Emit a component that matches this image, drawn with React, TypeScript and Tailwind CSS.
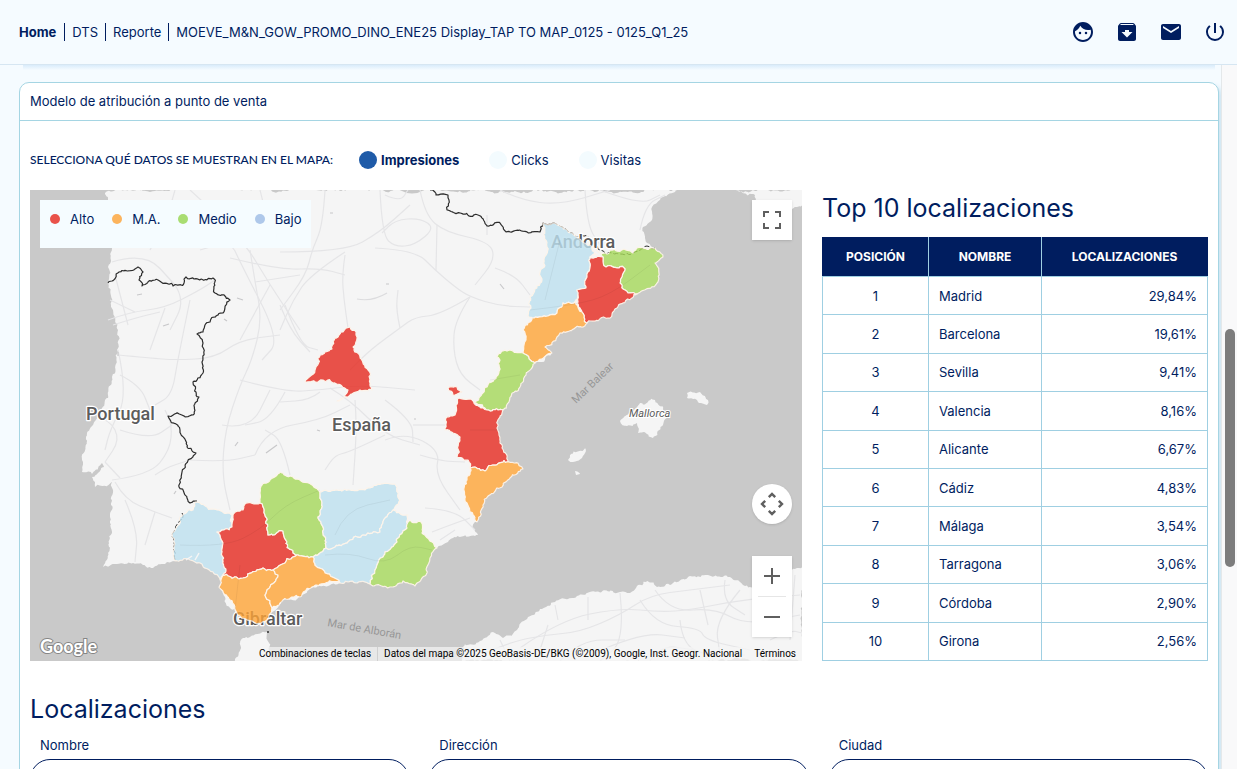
import { MdArchive, MdEmail, MdFace, MdPowerSettingsNew } from "react-icons/md";

type Point = [number, number];

const RED = "#e6291f";
const ORANGE = "#fea437";
const GREEN = "#a5d859";
const BLUE = "#bee1f0";

const legend = [
  { label: "Alto", dot: "bg-[#e9524a]" },
  { label: "M.A.", dot: "bg-[#fcb45d]" },
  { label: "Medio", dot: "bg-[#a9dd72]" },
  { label: "Bajo", dot: "bg-[#aec8ea]" },
];

const locations = [
  { name: "Madrid", value: "29,84%" },
  { name: "Barcelona", value: "19,61%" },
  { name: "Sevilla", value: "9,41%" },
  { name: "Valencia", value: "8,16%" },
  { name: "Alicante", value: "6,67%" },
  { name: "Cádiz", value: "4,83%" },
  { name: "Málaga", value: "3,54%" },
  { name: "Tarragona", value: "3,06%" },
  { name: "Córdoba", value: "2,90%" },
  { name: "Girona", value: "2,56%" },
];

const iberia =
  "125,190 105,193 110,208 108,225 112,248 108,267 108,283 113,310 118,330 117,350 112,377 105,400 101,410 97,417 87,433 82,460 82,472 92,474 102,463 104,467 98,473 92,477 95,487 112,482 113,490 110,517 112,533 108,553 103,567 117,564 133,563 153,568 167,562 175,561 190,560 200,563 213,572 220,580 219,587 225,597 230,608 247,622 260,625 268,622 272,612 282,600 297,599 310,588 340,583 370,584 390,587 403,581 415,586 427,573 430,558 437,548 453,538 478,535 473,528 477,522 483,505 497,488 510,478 523,469 518,463 509,462 502,448 497,428 498,420 503,410 520,387 535,363 542,362 552,353 545,347 560,333 587,323 608,318 615,309 637,294 658,282 659,273 655,263 663,257 655,248 647,243 643,227 652,220 652,207 663,197 677,190";

const landmasses = [
  "735,189 755,195 758,206 792,209 803,205 803,189",
  "234,662 243,638 267,632 272,662",
  "460,662 463,647 480,641 493,632 503,638 517,630 528,617 540,609 555,602 577,596 620,592 630,593 647,581 657,587 673,583 690,576 730,577 743,585 757,592 780,587 797,568 803,567 803,662",
  "620,421 630,413 640,403 655,400 668,412 663,425 653,438 647,434 638,433 637,423 627,426",
  "687,393 700,392 708,400 707,405 697,400 687,398",
  "568,460 570,455 585,448 585,453 573,462",
  "575,471 580,474 576,475",
];

const regions = [
  { name: "Lleida", fill: BLUE, points: "543,223 553,223 567,230 577,237 592,247 597,255 590,257 587,277 586,288 577,290 575,302 563,303 557,313 532,318 529,317 530,297 542,280 547,247" },
  { name: "Girona", fill: GREEN, points: "593,247 600,253 607,254 610,250 633,253 637,248 655,248 663,257 655,263 659,273 658,282 637,294 625,290 620,283 625,269 606,267 603,257" },
  { name: "Barcelona", fill: RED, points: "590,257 603,257 606,267 625,269 620,283 625,290 637,294 615,309 608,318 587,323 582,312 577,290 586,288 587,277" },
  { name: "Tarragona", fill: ORANGE, points: "523,330 532,318 557,313 563,303 575,302 582,312 587,323 560,333 545,347 552,353 535,363 523,353 526,340" },
  { name: "Castellón", fill: GREEN, points: "497,357 503,351 523,353 535,363 520,387 503,410 487,410 474,402 487,387 498,375 500,360" },
  { name: "Valencia", fill: RED, points: "459,398 470,399 480,407 487,410 503,410 498,420 497,428 502,448 509,462 493,465 485,471 470,468 468,460 457,457 460,437 453,433 445,430 447,417 455,415" },
  { name: "Rincón de Ademuz", fill: RED, points: "448,388 457,387 462,392 453,395" },
  { name: "Alicante", fill: ORANGE, points: "470,468 485,471 493,465 509,462 518,463 523,469 510,478 497,488 483,505 477,522 467,503 464,488 467,480" },
  { name: "Madrid", fill: RED, points: "350,327 356,335 354,350 360,357 368,370 370,380 372,390 360,390 348,397 337,401 348,390 333,383 323,380 305,382 315,370 318,358 325,352 332,349 335,338 343,332" },
  { name: "Huelva", fill: BLUE, points: "193,510 197,502 217,510 232,515 232,527 217,532 223,543 223,575 220,580 213,572 200,563 190,560 175,561 172,537 180,517 187,512" },
  { name: "Sevilla", fill: RED, points: "217,532 232,527 233,515 243,510 245,504 254,504 260,503 265,515 268,535 283,531 287,542 298,555 285,563 273,570 263,568 243,578 223,575 223,543" },
  { name: "Córdoba", fill: GREEN, points: "260,503 260,493 262,485 280,472 293,477 320,492 322,503 318,517 323,533 326,548 313,557 298,555 287,542 283,531 268,535 265,515" },
  { name: "Jaén", fill: BLUE, points: "320,492 350,490 370,488 390,484 397,487 400,500 393,510 383,523 380,532 363,535 350,540 333,548 326,548 323,533 318,517 322,503" },
  { name: "Granada", fill: BLUE, points: "326,548 333,548 350,540 363,535 380,532 383,523 393,510 408,515 407,528 397,542 383,557 375,570 370,584 340,583 317,567 313,557" },
  { name: "Almería", fill: GREEN, points: "410,520 421,522 422,533 437,548 430,558 427,573 415,586 403,581 390,587 370,584 375,570 383,557 397,542 407,528" },
  { name: "Cádiz", fill: ORANGE, points: "223,575 243,578 263,568 273,570 278,575 267,590 265,595 272,608 267,620 257,624 240,616 230,600 219,587" },
  { name: "Málaga", fill: ORANGE, points: "278,575 273,570 285,563 298,555 313,557 317,567 340,583 312,587 300,597 283,600 272,608 265,595 267,590" },
];

const borders = [
  "108,283 119,272 138,267 143,272 139,280 142,286 155,280 173,286 184,283 186,277 213,278 215,293 230,300 223,313 210,322 203,332 197,334 203,343 202,362 203,373 193,382 199,397 193,415 168,416 180,430 187,447 196,453 182,472 179,487 190,503 197,501",
  "430,190 436,195 448,195 447,210 478,215 487,226 500,223 510,232 540,232 543,223 553,223",
];

const dimBorders = [
  "182,513 172,537 175,560",
  "553,223 567,230 577,237 587,236 600,250 607,254 633,253 647,246 655,248",
];

const roads = [
  "112,262 145,252 175,285",
  "150,250 165,225 175,190",
  "190,190 240,235 270,285 300,330",
  "108,320 130,312 165,308 200,290 215,280",
  "113,325 135,318 160,312",
  "118,355 150,358 175,360 215,358 240,340 280,335",
  "165,308 150,350",
  "190,300 178,358 172,395 155,405",
  "118,350 128,395 110,430 105,450",
  "115,275 128,325",
  "110,300 135,312",
  "97,417 110,420 120,440 105,462",
  "112,480 150,475 170,450 172,425 165,410",
  "115,482 125,500 155,512 172,518",
  "125,500 138,530 135,562",
  "155,512 145,545",
  "105,462 120,478",
  "155,475 165,468 190,460",
  "250,250 255,282 262,320 252,360 240,385 225,430 222,475 230,510",
  "190,460 225,462 255,455",
  "222,425 250,430 270,390",
  "270,285 240,340",
  "255,282 300,275",
  "325,190 323,225 312,250 306,275 280,310",
  "280,252 345,252 380,232 410,205",
  "345,255 342,275 344,300 348,328",
  "345,252 310,275 293,300 280,330",
  "380,190 382,235 395,247 415,245 435,228 420,218 395,220 382,233",
  "385,195 400,202 408,190",
  "375,248 415,250 435,270 455,287 470,297 500,306 530,307",
  "437,225 436,270",
  "420,190 425,215 445,232 490,242 495,260 475,285",
  "495,268 515,275 530,295",
  "470,297 440,315 415,317 400,328 370,350 350,370",
  "470,297 455,320 453,350 460,375 480,390",
  "400,328 396,310 398,290",
  "285,305 300,345 318,350",
  "280,305 290,330 310,352",
  "200,250 230,240 240,262 280,340 262,360",
  "230,258 280,270 320,268 345,275",
  "240,380 285,392 320,390 360,385 415,390",
  "285,392 270,420 245,425",
  "320,392 310,400 280,402",
  "330,388 350,400 385,435 420,445",
  "355,400 357,425 353,485",
  "385,435 350,452 335,455 325,470",
  "385,400 412,420 413,442",
  "385,440 405,432 440,450 435,475 460,510",
  "420,455 440,461 465,462",
  "413,425 445,425",
  "425,508 455,510 475,530",
  "432,532 450,525 470,518",
  "440,540 455,530",
  "500,190 520,200 560,205 610,190",
  "585,190 587,225 600,245",
  "600,190 640,205 660,195",
  "640,230 645,205 665,195",
  "487,215 487,235",
  "175,285 185,300 170,330",
  "120,430 150,440 172,425",
  "120,375 140,385 150,410",
  "260,190 268,220 265,245",
  "255,455 265,430 320,420 350,405",
  "290,475 282,440 265,430",
];

const regionRoads = [
  "180,545 225,547 260,530 285,505 320,490",
  "335,535 345,510 390,500",
  "325,555 350,552 385,565 410,545 432,550",
  "240,565 235,610",
  "530,310 575,305 610,295 650,265",
  "545,300 560,240",
  "470,430 500,430",
  "490,380 520,375",
];

const africanRoads = [
  "480,655 510,642 545,635 580,632 620,615 650,595 690,590 730,585",
  "520,648 560,620 620,608 660,612 690,610 740,600 800,595",
  "555,605 558,620",
  "588,597 588,620",
  "620,593 625,640 600,661",
  "640,600 655,625 700,628 705,640 750,650",
  "655,590 670,612 715,608 745,625 800,615",
  "560,661 580,640 625,640",
  "680,620 682,640 700,655 745,655",
  "590,655 640,632 685,638",
  "700,590 708,625",
  "725,580 722,600 745,615",
  "740,590 715,620 720,655",
  "650,661 660,645 695,650",
  "540,650 548,625",
  "500,640 510,661",
  "770,640 790,630 802,633",
  "795,575 790,640",
];

const parse = (points: string): Point[] =>
  points.split(" ").map((pair) => pair.split(",").map(Number) as Point);

// Depends only on the midpoint, so neighbouring regions keep sharing the same edge
const noise = (x: number, y: number, seed: number) => {
  const n = Math.sin(x * 12.9898 + y * 78.233 + seed) * 43758.5453;
  return (n - Math.floor(n)) * 2 - 1;
};

const subdivide = (a: Point, b: Point): Point[] => {
  const length = Math.hypot(b[0] - a[0], b[1] - a[1]);
  if (length < 3) return [b];
  const mx = (a[0] + b[0]) / 2;
  const my = (a[1] + b[1]) / 2;
  const amount = Math.min(length * 0.24, 1.8);
  const mid: Point = [mx + noise(mx, my, 1) * amount, my + noise(mx, my, 7) * amount];
  return [...subdivide(a, mid), ...subdivide(mid, b)];
};

const roughPath = (points: string, closed = true) => {
  const list = parse(points);
  const ring = closed ? [...list, list[0]] : list;
  const out: Point[] = [ring[0]];
  for (let i = 1; i < ring.length; i++) out.push(...subdivide(ring[i - 1], ring[i]));
  return "M" + out.map(([x, y]) => `${x.toFixed(1)} ${y.toFixed(1)}`).join("L") + (closed ? "Z" : "");
};

const smoothPath = (points: string) => {
  const list = parse(points);
  let d = `M${list[0][0]} ${list[0][1]}`;
  for (let i = 1; i < list.length - 1; i++) {
    const [x, y] = list[i];
    const [nx, ny] = list[i + 1];
    d += `Q${x} ${y} ${(x + nx) / 2} ${(y + ny) / 2}`;
  }
  const last = list[list.length - 1];
  return `${d}L${last[0]} ${last[1]}`;
};

const MapDrawing = () => {
  return (
    <svg
      viewBox="30 190 772 471"
      preserveAspectRatio="xMidYMid slice"
      className="absolute inset-0 size-full"
      role="img"
      aria-label="Mapa de España"
    >
      <rect x="0" y="150" width="850" height="550" fill="#c9c9c9" />
      <g fill="#f5f5f5">
        <path d={roughPath(iberia)} />
        {landmasses.map((points) => (
          <path key={points} d={roughPath(points)} />
        ))}
      </g>
      <path d="M398 189 Q412 198 426 189Z" fill="#c9c9c9" />

      <g fill="none" stroke="#e5e5e7" strokeWidth="1.2" strokeLinejoin="round">
        {[...roads, ...africanRoads].map((points) => (
          <path key={points} d={smoothPath(points)} />
        ))}
      </g>
      <path
        d="M137 295l5 -1M237 298l6 2M163 326l6 -2M224 319l3 2M118 352v4M330 213l3 0M386 284l3 0M500 284l4 5M174 494l2 -3M266 453l11 -8M235 446l3 -4M414 419l2 0M317 430l3 1"
        fill="none"
        stroke="#c8c8ca"
        strokeWidth="1.2"
      />
      <path d="M357 299q15 3 30 -6" fill="none" stroke="#dcdcde" strokeWidth="1.2" />

      <g fill="none" stroke="#2d2d2d" strokeWidth="1.2" strokeLinejoin="round">
        {borders.map((points) => (
          <path key={points} d={roughPath(points, false)} />
        ))}
        {dimBorders.map((points) => (
          <path key={points} d={roughPath(points, false)} strokeDasharray="5 2" strokeWidth="1" />
        ))}
      </g>

      <g
        className="font-['Roboto',sans-serif] font-medium"
        fontSize="18"
        fill="#5c5c5c"
        stroke="#fff"
        strokeWidth="2.5"
        paintOrder="stroke"
        strokeLinejoin="round"
      >
        <text x="86" y="420">Portugal</text>
        <text x="332" y="431">España</text>
        <text x="551" y="248">Andorra</text>
        <text x="233" y="625">Gibraltar</text>
      </g>

      <g opacity="0.8" strokeLinejoin="round">
        {regions.map((region) => (
          <path key={region.name} d={roughPath(region.points)} fill={region.fill} stroke="#fff4e8" strokeWidth="1.2" />
        ))}
      </g>
      <g fill="none" stroke="#000" strokeOpacity="0.05">
        {regionRoads.map((points) => (
          <path key={points} d={smoothPath(points)} />
        ))}
      </g>
      <path d="M186 560l6 -4M195 560l4 -7" stroke="#f5f5f5" strokeWidth="1.5" />
      <circle cx="268" cy="632" r="1" fill="#2d2d2d" />

      <g className="font-['Roboto',sans-serif]" fontSize="11">
        <text
          x="629"
          y="417"
          fontStyle="italic"
          fill="#5c5c5c"
          stroke="#fff"
          strokeWidth="2"
          paintOrder="stroke"
        >
          Mallorca
        </text>
        <text x="576" y="404" fill="#979797" transform="rotate(-44 576 404)">Mar Balear</text>
        <text x="327" y="626" fill="#979797" transform="rotate(10 327 626)">Mar de Alborán</text>
      </g>
    </svg>
  );
};

const MapLegend = () => {
  return (
    <ul className="absolute left-2.5 top-2.5 flex h-12 gap-[18px] bg-[#f5fcff] px-2.5 pt-[9px]">
      {legend.map((item) => (
        <li key={item.label} className="flex h-5 items-center gap-2.5">
          <span className={`size-2.5 rounded-full ${item.dot}`} />
          {item.label}
        </li>
      ))}
    </ul>
  );
};

const MapControls = () => {
  return (
    <>
      <button
        aria-label="Pantalla completa"
        className="absolute right-2.5 top-2.5 flex size-10 items-center justify-center bg-white shadow"
      >
        <svg viewBox="0 0 18 18" className="size-[18px]" fill="#5f5f5f">
          <path d="M0 0v6h2V2h4V0H0zm16 0h-4v2h4v4h2V0h-2zm0 16h-4v2h6v-6h-2v4zM2 12H0v6h6v-2H2v-4z" />
        </svg>
      </button>
      <div className="absolute bottom-6 right-2.5 flex flex-col gap-8">
        <button
          aria-label="Controles de visualización del mapa"
          className="flex size-10 items-center justify-center rounded-full bg-white shadow"
        >
          <svg viewBox="0 0 24 24" className="size-6" fill="none" stroke="#5f5f5f" strokeWidth="2.4">
            <path d="M8.8 5.2 12 2l3.2 3.2M8.8 18.8 12 22l3.2-3.2M5.2 8.8 2 12l3.2 3.2M18.8 8.8 22 12l-3.2 3.2" />
          </svg>
        </button>
        <div className="flex w-10 flex-col items-center bg-white shadow">
          <button aria-label="Ampliar" className="flex size-10 items-center justify-center">
            <svg viewBox="0 0 18 18" className="size-[18px]" fill="#5f5f5f">
              <path d="M8 1h2v7h7v2h-7v7H8v-7H1V8h7z" />
            </svg>
          </button>
          <span className="h-px w-7 bg-[#e6e6e6]" />
          <button aria-label="Reducir" className="flex size-10 items-center justify-center">
            <svg viewBox="0 0 18 18" className="size-[18px]" fill="#5f5f5f">
              <path d="M1 8h16v2H1z" />
            </svg>
          </button>
        </div>
      </div>
    </>
  );
};

const MapPanel = () => {
  return (
    <div className="relative min-h-[471px] overflow-hidden bg-[#c9c9c9]">
      <MapDrawing />
      <MapLegend />
      <MapControls />
      <a href="#google" aria-label="Google" className="absolute bottom-0 left-1.5">
        <svg viewBox="0 0 66 28" className="h-7 w-[66px]">
          <text
            x="4"
            y="20"
            fontSize="18"
            className="font-['Lato',sans-serif] font-bold"
            fill="#fff"
            stroke="#858585"
            strokeWidth="2"
            paintOrder="stroke"
          >
            Google
          </text>
        </svg>
      </a>
      <div className="absolute bottom-0 right-0 flex h-3.5 items-center whitespace-nowrap bg-[#f5f5f5]/70 font-['Roboto',sans-serif] text-[10px] leading-3.5 text-black">
        <button className="px-1.5">Combinaciones de teclas</button>
        <span className="border-l border-[#d0d0d0] px-1.5">
          Datos del mapa ©2025 GeoBasis-DE/BKG (©2009), Google, Inst. Geogr. Nacional
        </span>
        <a href="#terminos" className="px-1.5">Términos</a>
      </div>
    </div>
  );
};

const Header = () => {
  return (
    <header className="flex h-[65px] shrink-0 items-center justify-between border-b border-[#d6e6f2] bg-[#f5fbff] pl-[19px] pr-2.5">
      <nav className="flex h-[18px] items-center divide-x divide-[#001d5f] whitespace-nowrap leading-[18px]">
        <a href="#home" className="pr-2 font-bold">Home</a>
        <a href="#dts" className="px-[7px]">DTS</a>
        <a href="#reporte" className="px-[7px]">Reporte</a>
        <span className="pl-[7px]">MOEVE_M&amp;N_GOW_PROMO_DINO_ENE25 Display_TAP TO MAP_0125 - 0125_Q1_25</span>
      </nav>
      <div className="flex gap-5 text-2xl">
        <button aria-label="Perfil"><MdFace /></button>
        <button aria-label="Descargas"><MdArchive /></button>
        <button aria-label="Mensajes"><MdEmail /></button>
        <button aria-label="Salir"><MdPowerSettingsNew /></button>
      </div>
    </header>
  );
};

const MetricSelector = () => {
  return (
    <fieldset aria-labelledby="metric-label" className="flex h-[69px] items-center pt-2">
      <span id="metric-label" className="mr-[26px] font-['Lato',sans-serif] text-[12px] font-medium">
        SELECCIONA QUÉ DATOS SE MUESTRAN EN EL MAPA:
      </span>
      <div className="flex gap-[30px]">
        {["Impresiones", "Clicks", "Visitas"].map((metric, i) => (
          <label key={metric} className="flex items-center gap-1 has-checked:font-bold">
            <input
              type="radio"
              name="metric"
              defaultChecked={i === 0}
              className="size-[18px] appearance-none rounded-full bg-[#f3fbfe] checked:bg-[#1f5ba8]"
            />
            {metric}
          </label>
        ))}
      </div>
    </fieldset>
  );
};

const TopLocations = () => {
  return (
    <div>
      <h2 className="mb-[11px] text-[25px] leading-9">Top 10 localizaciones</h2>
      <table className="h-[424px] w-full table-fixed border-collapse">
        <thead>
          <tr className="h-[39px] bg-[#001d5f] text-[12px] text-white">
            <th className="w-[106px] border border-[#9fcfe2] border-l-[#001d5f] border-t-[#001d5f] font-bold">POSICIÓN</th>
            <th className="w-[113px] border border-[#9fcfe2] border-t-[#001d5f] font-bold">NOMBRE</th>
            <th className="border border-[#9fcfe2] border-r-[#001d5f] border-t-[#001d5f] font-bold">LOCALIZACIONES</th>
          </tr>
        </thead>
        <tbody>
          {locations.map((row, i) => (
            <tr key={row.name}>
              <td className="border border-[#9fcfe2] px-2.5 text-center">{i + 1}</td>
              <td className="border border-[#9fcfe2] px-2.5">{row.name}</td>
              <td className="border border-[#9fcfe2] px-2.5 text-right">{row.value}</td>
            </tr>
          ))}
        </tbody>
      </table>
    </div>
  );
};

const App = () => {
  return (
    <div className="flex h-screen flex-col overflow-hidden bg-[#f5fbff] font-['Inter',sans-serif] text-[13px] leading-5 text-[#001d5f]">
      <Header />
      <div className="flex min-h-0 flex-1">
        <main className="min-w-0 flex-1 overflow-hidden pl-[19px] pr-0.5">
          <div className="mx-1 mb-3 h-[5px] bg-linear-to-b from-[#d9ecfb] to-[#f5fbff]" />
          <section className="rounded-[10px] border border-[#a5d5e3] bg-white shadow-[4px_4px_5px_#cfe5f2]">
            <h1 className="border-b border-[#a5d5e3] px-2.5 pb-[9px] pt-2">Modelo de atribución a punto de venta</h1>
            <div className="px-2.5 pb-10">
              <MetricSelector />
              <div className="grid grid-cols-[2fr_1fr] gap-5">
                <MapPanel />
                <TopLocations />
              </div>
              <h2 className="mb-2 mt-[30px] text-[25px] leading-9">Localizaciones</h2>
              <form className="grid grid-cols-3 gap-5">
                {["Nombre", "Dirección", "Ciudad"].map((field) => (
                  <label key={field} className="flex flex-col gap-1">
                    <span className="px-2.5">{field}</span>
                    <input
                      type="text"
                      className="h-10 w-full rounded-[20px] border border-[#001d5f] bg-white px-4 outline-none"
                    />
                  </label>
                ))}
              </form>
            </div>
          </section>
        </main>
        <div className="flex w-4 shrink-0 justify-center border-l border-[#e4e8ea] bg-[#f9f9fa]">
          <div className="mt-[264px] h-[238px] w-2.5 rounded-full bg-[#7d7d7d]" />
        </div>
      </div>
    </div>
  );
};

export default App;
